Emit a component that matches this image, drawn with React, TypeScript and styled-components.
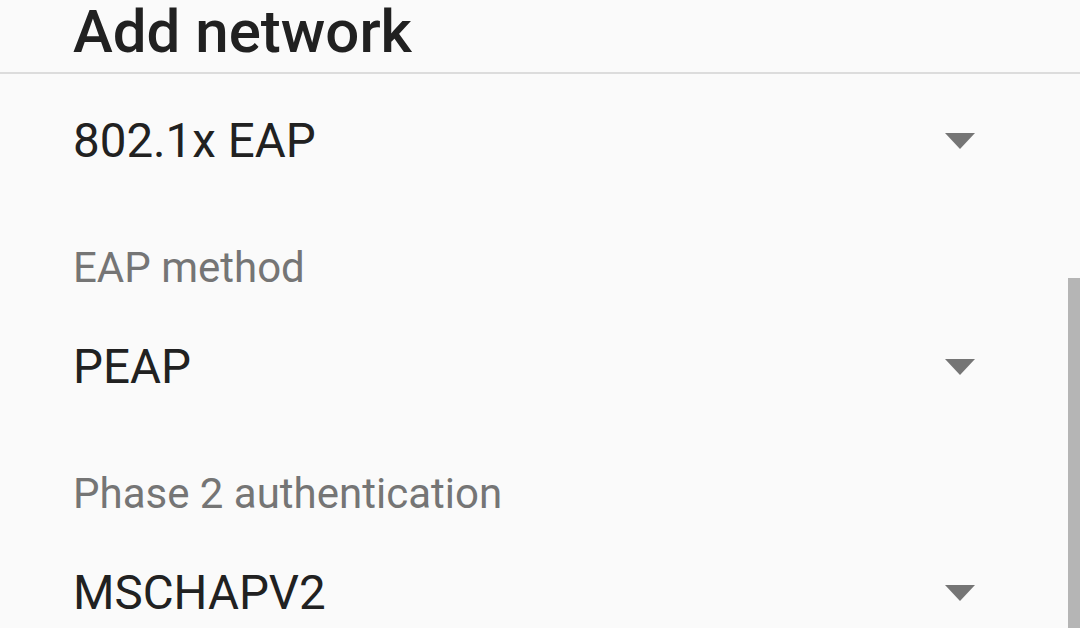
import styled, { createGlobalStyle } from "styled-components";

const GlobalStyle = createGlobalStyle`
    html, body {
        margin: 0;
        padding: 0;
        background: #fafafa;
    }
    body {
        font-family: Roboto, "Noto Sans", "Liberation Sans", sans-serif;
        overflow: hidden;
    }
`

const Screen = styled.div`
    position: relative;
    width: 1080px;
    height: 628px;
    background: #fafafa;
    overflow: hidden;
`

const Header = styled.header`
    height: 72px;
    padding-left: 73px;
    border-bottom: 2px solid #dcdcdc;
`

const Title = styled.h1`
    margin: 0;
    font-size: 60px;
    line-height: 64px;
    font-weight: 500;
    color: #212121;
`

const Form = styled.div`
    display: flex;
    flex-direction: column;
    padding: 39px 105px 0 73px;
`

const Field = styled.div`
    display: flex;
    flex-direction: column;
    & + & {
        margin-top: 70px;
    }
`

const Label = styled.div`
    font-size: 42px;
    line-height: 57px;
    color: #757575;
    margin-bottom: 43px;
`

const Select = styled.div`
    display: flex;
    align-items: center;
    justify-content: space-between;
    height: 56px;
`

const Value = styled.span`
    font-size: 47.5px;
    line-height: 56px;
    color: #212121;
`

const Arrow = styled.svg`
    width: 30px;
    height: 16px;
    flex-shrink: 0;
`

const Scrollbar = styled.div`
    position: absolute;
    right: 0;
    top: 278px;
    bottom: 0;
    width: 12px;
    background: #b5b5b5;
`

interface FieldData {
    label?: string,
    value: string,
}

const fields: FieldData[] = [
    { value: '802.1x EAP' },
    { label: 'EAP method', value: 'PEAP' },
    { label: 'Phase 2 authentication', value: 'MSCHAPV2' },
]

const App = () => {
    return (
        <Screen>
            <GlobalStyle />
            <Header>
                <Title>Add network</Title>
            </Header>
            <Form>
                {fields.map((f, idx) => (
                    <Field key={idx}>
                        {f.label && <Label>{f.label}</Label>}
                        <Select>
                            <Value>{f.value}</Value>
                            <Arrow viewBox="0 0 30 16">
                                <path d="M0 0 L30 0 L15 16 Z" fill="#757575" />
                            </Arrow>
                        </Select>
                    </Field>
                ))}
            </Form>
            <Scrollbar />
        </Screen>
    )
}

export default App
